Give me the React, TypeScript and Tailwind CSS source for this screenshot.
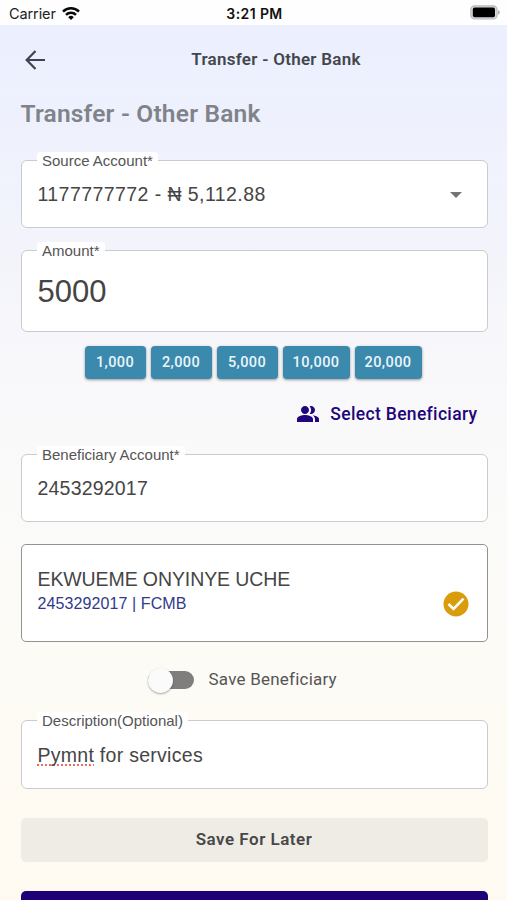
import type { ReactNode } from "react";

const AMOUNTS = [
  { label: "1,000", width: "w-[61px]" },
  { label: "2,000", width: "w-[61px]" },
  { label: "5,000", width: "w-[61px]" },
  { label: "10,000", width: "w-[67px]" },
  { label: "20,000", width: "w-[67px]" },
];

const SANS = "font-['Liberation_Sans',Arial,sans-serif]";

function StatusBar() {
  return (
    <div className="flex h-[25px] shrink-0 items-center bg-[#fefefe] pl-[9px] pr-[7px] font-['Inter',sans-serif] text-[#202124]">
      <div className="flex flex-1 items-center gap-[6px] pt-[2px]">
        <span className="text-[14.5px] leading-4 tracking-[-0.1px]">Carrier</span>
        <svg width="18" height="13" viewBox="0 0 18 13" fill="none" stroke="#080808" strokeWidth="2.5">
          <path d="M1 4.6a11.4 11.4 0 0 1 16 0" />
          <path d="M4 7.9a7.1 7.1 0 0 1 10 0" />
          <path d="M9 13 6.2 10.2a4 4 0 0 1 5.6 0Z" fill="#080808" stroke="none" />
        </svg>
      </div>
      <span className="pt-[2px] text-[14px] font-semibold leading-4 tracking-[0.4px] text-[#111]">3:21 PM</span>
      <div className="flex flex-1 justify-end">
        <svg width="30" height="15" viewBox="0 0 30 15">
          <rect x="0.8" y="0.8" width="26.2" height="13.2" rx="3.8" fill="#d8d8da" stroke="#b9b9bb" strokeWidth="1.2" />
          <rect x="2.8" y="2.6" width="22.2" height="9.6" rx="1.8" fill="#000" />
          <path d="M28 5.1v4.6q1.8-.7 1.8-2.3T28 5.1Z" fill="#aeaeb0" />
        </svg>
      </div>
    </div>
  );
}

function Field({ label, size, children }: { label: string; size: string; children: ReactNode }) {
  return (
    <div className={`relative flex items-center rounded-[6px] border-[1.5px] border-[#cbcbcd] bg-white px-[16px] pt-[2px] text-[#454545] ${SANS} ${size}`}>
      <span className="absolute -top-[9px] left-[15.5px] rounded-[4px] bg-white px-[5px] text-[15px] leading-[18px] text-[#555]">
        {label}
      </span>
      {children}
    </div>
  );
}

export default function App() {
  return (
    <div className="flex h-[900px] w-full flex-col overflow-hidden bg-[linear-gradient(180deg,#ebefff_0%,#eef1fd_13%,#f3f4fb_28%,#f8f8fb_40%,#fafaf9_56%,#fdfbf5_76%,#fffaf1_100%)] font-['Roboto',sans-serif]">
      <StatusBar />
      <header className="flex h-[69px] shrink-0 items-center pl-[23px] pr-[2px]">
        <svg width="24" height="24" viewBox="0 0 24 24" fill="none" stroke="#3f434b" strokeWidth="2.2">
          <path d="M22 12H4M12.5 3 3.7 12l8.8 9" />
        </svg>
        <h1 className="flex-1 text-center text-[17px] font-semibold tracking-[0.27px] text-[#43464d]">Transfer - Other Bank</h1>
      </header>
      <main className="flex flex-col pl-[20.5px] pr-[19.5px]">
        <h2 className="mt-[4px] h-[30px] text-[24.5px] font-semibold leading-[31px] tracking-[0.2px] text-[#808389]">Transfer - Other Bank</h2>

        <div className="mt-[32px] flex flex-col gap-[22px]">
          <Field label="Source Account*" size="h-[68px]">
            <span className="flex-1 text-[19.5px] tracking-[0.43px]">1177777772 - ₦ 5,112.88</span>
            <svg className="mr-[9px]" width="12" height="6" viewBox="0 0 12 6" fill="#757575">
              <path d="M0 0h12L6 6Z" />
            </svg>
          </Field>
          <Field label="Amount*" size="h-[82px]">
            <span className="text-[31px] leading-[34px]">5000</span>
          </Field>
        </div>

        <div className="ml-[64px] mt-[14px] flex gap-[5px]">
          {AMOUNTS.map((a) => (
            <button
              key={a.label}
              className={`h-[33px] rounded-[4px] bg-[#3b8aae] pt-px text-[14.5px] font-medium tracking-[0.4px] text-[#eaf5fa] shadow-[0_1px_3px_rgba(0,0,0,0.4)] ${a.width}`}
            >
              {a.label}
            </button>
          ))}
        </div>

        <div className="mt-[22px] flex h-[26px] items-center justify-end gap-[10px] pr-[10px] text-[#21057c]">
          <svg width="24" height="24" viewBox="0 0 24 24" fill="currentColor">
            <path d="M16.67 13.13C18.04 14.06 19 15.32 19 17v3h4v-3c0-2.18-3.57-3.47-6.33-3.87zM15 12c2.21 0 4-1.79 4-4s-1.79-4-4-4c-.47 0-.91.1-1.33.24a5.98 5.98 0 0 1 0 7.52c.42.14.86.24 1.33.24zM9 12c2.21 0 4-1.79 4-4s-1.79-4-4-4-4 1.79-4 4 1.79 4 4 4zm0 1c-2.67 0-8 1.34-8 4v3h16v-3c0-2.66-5.33-4-8-4z" />
          </svg>
          <span className="text-[17.5px] font-medium tracking-[0.33px]">Select Beneficiary</span>
        </div>

        <div className="mt-[27px] flex flex-col">
          <Field label="Beneficiary Account*" size="h-[68px]">
            <span className="text-[19.5px] tracking-[0.2px]">2453292017</span>
          </Field>
        </div>

        <div className={`mt-[22px] flex h-[98px] items-center justify-between rounded-[5px] border-[1.5px] border-[#929292] bg-white pl-[16px] pr-[18px] ${SANS}`}>
          <div className="pb-[4px]">
            <div className="text-[19.5px] leading-[25px] tracking-[-0.1px] text-[#454545]">EKWUEME ONYINYE UCHE</div>
            <div className="text-[16px] leading-[23px] tracking-[0.1px] text-[#303a88]">2453292017 | FCMB</div>
          </div>
          <svg className="mt-[22px]" width="26" height="26" viewBox="0 0 26 26">
            <circle cx="13" cy="13" r="12.5" fill="#d99c0b" />
            <path d="m5.5 13 5 5 10-10.4" fill="none" stroke="#fff" strokeWidth="2.6" />
          </svg>
        </div>

        <div className="ml-[127.5px] mt-[22px] flex h-[32px] items-center">
          <div className="flex h-[18px] w-[46px] items-center rounded-full bg-[#7f7e7c]">
            <div className="h-[25px] w-[25px] shrink-0 rounded-full bg-[#fbfbfb] shadow-[0_1px_2px_rgba(0,0,0,0.35)]" />
          </div>
          <span className="ml-[14.5px] text-[17px] tracking-[0.22px] text-[#555]">Save Beneficiary</span>
        </div>

        <div className="mt-[24px] flex flex-col">
          <Field label="Description(Optional)" size="h-[69px]">
            <span className="text-[19.5px] tracking-[0.28px]">
              <span className="underline decoration-[#ee6c66] decoration-dotted decoration-2 underline-offset-[3px] [text-decoration-skip-ink:none]">Pymnt</span> for services
            </span>
          </Field>
        </div>

        <button className="mt-[29px] h-[44px] rounded-[5px] bg-[#efece6] text-[17px] font-semibold tracking-[0.5px] text-[#484848]">
          Save For Later
        </button>
        <button aria-label="Continue" className="mt-[29px] h-[44px] shrink-0 rounded-[5px] bg-[#1e0077]" />
      </main>
    </div>
  );
}
